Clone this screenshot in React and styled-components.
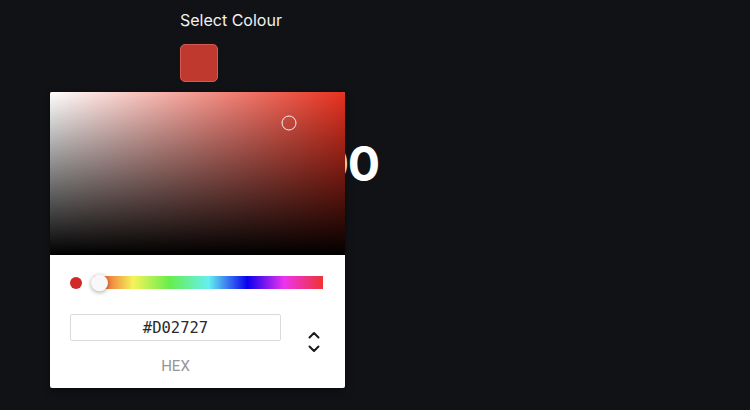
import React from 'react';
import styled, { createGlobalStyle } from 'styled-components';

const GlobalStyle = createGlobalStyle`
  html, body {
    margin: 0;
    padding: 0;
    background: #111216;
  }
  body {
    font-family: Inter, "Noto Sans", sans-serif;
  }
`;

function HueArrows() {
  return (
    <svg width="12" height="24" viewBox="0 0 12 24" fill="none">
      <path d="M1.5 7.5 L6 3 L10.5 7.5" stroke="#1a1a1a" strokeWidth="2" strokeLinecap="round" strokeLinejoin="round" />
      <path d="M1.5 16.5 L6 21 L10.5 16.5" stroke="#1a1a1a" strokeWidth="2" strokeLinecap="round" strokeLinejoin="round" />
    </svg>
  );
}

function ColourPicker({ hex, pointerX, pointerY }) {
  return (
    <Picker>
      <Saturation>
        <SatPointer style={{ left: pointerX, top: pointerY }} />
      </Saturation>
      <Body>
        <HueRow>
          <Dot $colour={hex} />
          <HueBar>
            <HueThumb />
          </HueBar>
        </HueRow>
        <FieldRow>
          <FieldColumn>
            <HexInput readOnly value={hex} />
            <FieldLabel>HEX</FieldLabel>
          </FieldColumn>
          <Toggle>
            <HueArrows />
          </Toggle>
        </FieldRow>
      </Body>
    </Picker>
  );
}

export default function App() {
  return (
    <>
      <GlobalStyle />
      <Page>
        <Column>
          <Title>Select Colour</Title>
          <Swatch $colour="#C0392F" />
          <Amount>£10,000</Amount>
        </Column>
        <ColourPicker hex="#D02727" pointerX={239} pointerY={31} />
      </Page>
    </>
  );
}

const Page = styled.div`
  position: relative;
  width: 750px;
  height: 410px;
  overflow: hidden;
  background: #111216;
`;

const Column = styled.div`
  display: flex;
  flex-direction: column;
  align-items: flex-start;
  padding: 10px 0 0 180px;
`;

const Title = styled.div`
  color: #f2f2f2;
  font-size: 16px;
  line-height: 20px;
`;

const Swatch = styled.div`
  margin-top: 14px;
  width: 38px;
  height: 38px;
  box-sizing: border-box;
  border-radius: 5px;
  background: ${(p) => p.$colour};
  border: 1px solid #d65a52;
`;

const Amount = styled.div`
  margin: 53px 0 0 15px;
  color: #fff;
  font-size: 48px;
  font-weight: 700;
  line-height: 58px;
  letter-spacing: -1.5px;
`;

const Picker = styled.div`
  position: absolute;
  left: 50px;
  top: 92px;
  width: 295px;
  background: #fff;
  border-radius: 2px;
  box-shadow: 0 0 2px rgba(0, 0, 0, 0.3), 0 4px 8px rgba(0, 0, 0, 0.3);
  overflow: hidden;
`;

const Saturation = styled.div`
  position: relative;
  height: 163px;
  background:
    linear-gradient(to top, #000, rgba(0, 0, 0, 0)),
    linear-gradient(to right, #fff, rgba(255, 255, 255, 0)),
    #e8311f;
`;

const SatPointer = styled.div`
  position: absolute;
  width: 15px;
  height: 15px;
  box-sizing: border-box;
  border-radius: 50%;
  border: 1.5px solid #f2f2f2;
  transform: translate(-7.5px, -7.5px);
`;

const Body = styled.div`
  padding: 19px 22px 12px 20px;
`;

const HueRow = styled.div`
  display: flex;
  align-items: center;
  height: 17px;
`;

const Dot = styled.div`
  width: 12px;
  height: 12px;
  border-radius: 50%;
  background: ${(p) => p.$colour};
  flex-shrink: 0;
`;

const HueBar = styled.div`
  position: relative;
  flex: 1;
  margin-left: 12px;
  height: 13px;
  background: linear-gradient(
    to right,
    #ee3a2e 0%,
    #f5f35a 17%,
    #66ee4d 33%,
    #66f0f0 50%,
    #0a00ee 67%,
    #ee33ee 83%,
    #ee3333 100%
  );
`;

const HueThumb = styled.div`
  position: absolute;
  left: -3px;
  top: 50%;
  width: 17px;
  height: 17px;
  border-radius: 50%;
  background: #f8f8f8;
  transform: translateY(-50%);
  box-shadow: 0 1px 4px rgba(0, 0, 0, 0.37);
`;

const FieldRow = styled.div`
  display: flex;
  margin-top: 23px;
`;

const FieldColumn = styled.div`
  display: flex;
  flex-direction: column;
  align-items: center;
  width: 211px;
`;

const HexInput = styled.input`
  width: 100%;
  height: 27px;
  box-sizing: border-box;
  border: 1px solid #dadada;
  border-radius: 2px;
  box-shadow: none;
  outline: none;
  text-align: center;
  font-family: "DejaVu Sans Mono", "Liberation Mono", monospace;
  font-size: 15.5px;
  color: #2a2a2a;
  padding: 0;
`;

const FieldLabel = styled.div`
  margin-top: 15px;
  font-family: Roboto, "Liberation Sans", sans-serif;
  font-size: 15px;
  line-height: 20px;
  color: #969696;
`;

const Toggle = styled.div`
  display: flex;
  justify-content: center;
  width: 18px;
  margin-left: 24px;
  padding-top: 16px;
`;
